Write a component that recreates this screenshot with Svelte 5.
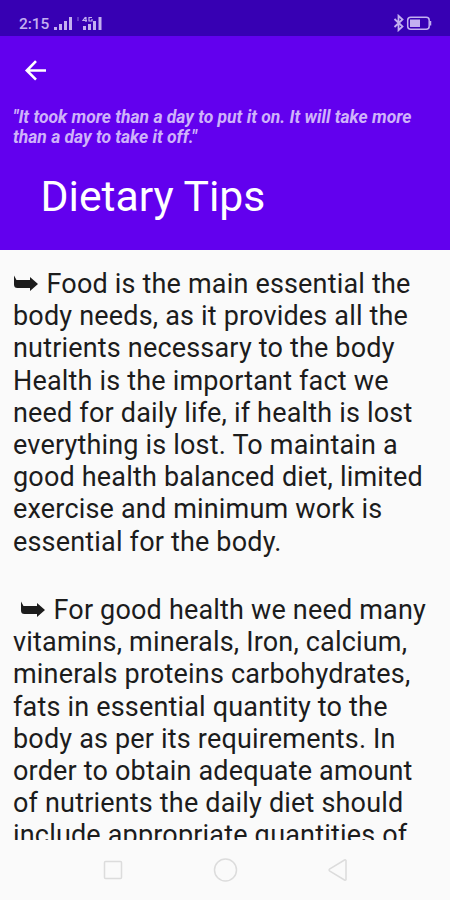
<script>
  const paragraphs = [
    {
      indent: 0,
      lines: [
        'Food is the main essential the',
        'body needs, as it provides all the',
        'nutrients necessary to the body',
        'Health is the important fact we',
        'need for daily life, if health is lost',
        'everything is lost. To maintain a',
        'good health balanced diet, limited',
        'exercise and minimum work is',
        'essential for the body.'
      ]
    },
    {
      indent: 7,
      lines: [
        'For good health we need many',
        'vitamins, minerals, Iron, calcium,',
        'minerals proteins carbohydrates,',
        'fats in essential quantity to the',
        'body as per its requirements. In',
        'order to obtain adequate amount',
        'of nutrients the daily diet should',
        'include appropriate quantities of'
      ]
    }
  ];
</script>

<div class="screen">
  <div class="status">
    <span class="time">2:15</span>
    <svg class="signal" width="52" height="18" viewBox="0 0 52 18" fill="#c3b0f0">
      <rect x="1" y="13" width="3" height="3" />
      <rect x="6" y="10" width="3" height="6" />
      <rect x="11" y="7" width="3" height="9" />
      <rect x="16" y="3" width="3" height="13" />
      <rect x="24" y="3" width="2" height="4" opacity=".3" />
      <path d="M32.5 3l-2.5 3.500h4M33 3v5M39 3.500h-3v3.500h3v-2" fill="none" stroke="#c3b0f0" stroke-width="1.2" />
      <rect x="30" y="12" width="3" height="4" />
      <rect x="35" y="10" width="3" height="6" />
      <rect x="40" y="7" width="3" height="9" />
      <rect x="45.5" y="3" width="3" height="13" />
    </svg>
    <svg class="power" width="42" height="18" viewBox="0 0 42 18" fill="none" stroke="#c3b0f0">
      <path d="M2.5 5l8 7.5-4 3.7V1.8l4 3.7-8 7.5" stroke-width="1.8" />
      <rect x="15.7" y="3.2" width="21.5" height="12" rx="3" stroke-width="1.5" />
      <rect x="18" y="5.5" width="10" height="7.5" fill="#c3b0f0" stroke="none" />
      <path d="M38.5 7v4.5" stroke-width="1.5" />
    </svg>
  </div>

  <header>
    <svg class="back" width="24" height="24" viewBox="0 0 24 24" fill="none" stroke="#fff" stroke-width="2.6">
      <path d="M22 12.5H3M12 3.2L2.8 12.5l9.2 9.2" />
    </svg>
    <p class="quote">"It took more than a day to put it on. It will take more<br />than a day to take it off."</p>
    <h1>Dietary Tips</h1>
  </header>

  <main>
    {#each paragraphs as p}
      <p class="tip">
        {#each p.lines as line, i}
          <span class="line" class:first={i === 0} style:padding-left={i === 0 ? `${p.indent}px` : null}>
            {#if i === 0}
              <svg class="bullet" width="26" height="18" viewBox="0 0 26 18" fill="#1c1c1c">
                <path d="M1 .5l2.500 4.500h13.500V2l8 7-8 7v-3H4.500Q1 13 1 9.500z" />
              </svg>
            {/if}{line}
          </span>
        {/each}
      </p>
    {/each}
  </main>

  <nav>
    <svg width="22" height="22" viewBox="0 0 22 22"><rect x="2.5" y="2.5" width="17" height="17" rx="1" /></svg>
    <svg width="26" height="26" viewBox="0 0 26 26"><circle cx="12.5" cy="13" r="11" /></svg>
    <svg width="22" height="24" viewBox="0 0 22 24"><path d="M19 2.5v19q-.2 1-1.500.5L2.500 13q-1-1 0-2L17.500 2q1.300-.5 1.500.5z" /></svg>
  </nav>
</div>

<style>
  :global(body) {
    margin: 0;
  }
  .screen {
    width: 450px;
    height: 900px;
    display: flex;
    flex-direction: column;
    overflow: hidden;
    background: #fafafa;
    font-family: Roboto, sans-serif;
  }
  .status {
    height: 36px;
    flex: none;
    box-sizing: border-box;
    padding: 10px 16px 0 19px;
    display: flex;
    align-items: flex-start;
    background: #3700b3;
    color: #c3b0f0;
  }
  .time {
    width: 34px;
    font-size: 15.5px;
    line-height: 28px;
    font-weight: 500;
    letter-spacing: -0.1px;
  }
  .signal {
    margin-top: 4px;
  }
  .power {
    margin: 4px 0 0 auto;
  }
  header {
    height: 214px;
    flex: none;
    box-sizing: border-box;
    padding: 22px 13px 0;
    background: #6200ee;
    color: #fff;
  }
  .back {
    display: block;
    margin-left: 11px;
  }
  .quote {
    margin: 25px 0 0;
    font-size: 17.5px;
    line-height: 20px;
    font-weight: 700;
    font-style: italic;
    color: #cfb3fa;
    white-space: nowrap;
  }
  h1 {
    margin: 23px 0 0 27.5px;
    font-size: 42.7px;
    line-height: 52px;
    font-weight: 400;
    white-space: nowrap;
  }
  main {
    height: 590px;
    flex: none;
    box-sizing: border-box;
    padding: 17.2px 13px 0;
    overflow: hidden;
    color: #1c1c1c;
    font-size: 27px;
  }
  .tip {
    margin: 0 0 35.5px;
  }
  .line {
    display: block;
    height: 32.2px;
    line-height: 32.2px;
    letter-spacing: 0.18px;
    white-space: nowrap;
  }
  .first {
    height: 33px;
    display: flex;
    align-items: center;
  }
  .bullet {
    margin-right: 7.5px;
  }
  nav {
    flex: 1;
    display: flex;
    align-items: center;
    justify-content: space-between;
    padding: 0 101px 0 102px;
    fill: none;
    stroke: #dcdcdc;
    stroke-width: 1.5;
  }
</style>
